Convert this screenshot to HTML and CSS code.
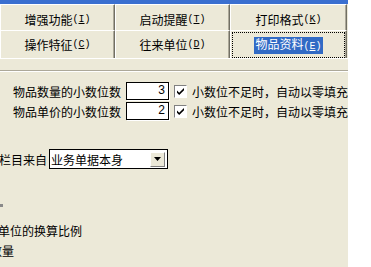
FILE: index.html
```html
<!DOCTYPE html>
<html lang="zh-CN">
<head>
    <meta charset="UTF-8">
    <title>选项</title>
    <link rel="stylesheet" href="styles.css">
</head>
<body>
    <div class="dialog">
        <div class="tabs">
            <div class="tab-row back">
                <div class="tab">增强功能<span class="key">(<u>I</u>)</span></div>
                <div class="tab">启动提醒<span class="key">(<u>T</u>)</span></div>
                <div class="tab wide">打印格式<span class="key">(<u>K</u>)</span></div>
            </div>
            <div class="tab-row front">
                <div class="tab">操作特征<span class="key">(<u>C</u>)</span></div>
                <div class="tab">往来单位<span class="key">(<u>D</u>)</span></div>
                <div class="tab wide active">
                    <div class="focus"><span class="sel">物品资料<span class="key">(<u>E</u>)</span></span></div>
                </div>
            </div>
        </div>

        <div class="page">
            <div class="rule"></div>

            <div class="field">
                <span class="label">物品数量的小数位数</span>
                <span class="spin">3</span>
                <span class="check">
                    <svg viewBox="0 0 13 13" width="13" height="13">
                        <path d="M3 5.5 L5.2 7.8 L10 3 L10 5.2 L5.2 10 L3 7.7 Z" fill="#000"/>
                    </svg>
                </span>
                <span class="check-text">小数位不足时，自动以零填充</span>
            </div>
            <div class="field">
                <span class="label">物品单价的小数位数</span>
                <span class="spin">2</span>
                <span class="check">
                    <svg viewBox="0 0 13 13" width="13" height="13">
                        <path d="M3 5.5 L5.2 7.8 L10 3 L10 5.2 L5.2 10 L3 7.7 Z" fill="#000"/>
                    </svg>
                </span>
                <span class="check-text">小数位不足时，自动以零填充</span>
            </div>

            <div class="source">
                <span class="source-label">栏目来自</span>
                <div class="combo">
                    <span class="combo-text">业务单据本身</span>
                    <span class="combo-btn">
                        <svg viewBox="0 0 7 4" width="7" height="4"><path d="M0 0 H7 L3.5 4 Z" fill="#000"/></svg>
                    </span>
                </div>
            </div>

            <div class="dot"></div>
            <div class="line ratio">单位的换算比例</div>
            <div class="line qty">辅助数量</div>
        </div>
    </div>
</body>
</html>
```

FILE: styles.css
```css
body {
    margin: 0;
    background: #fff;
    font-family: "Noto Sans CJK SC", sans-serif;
    font-size: 12px;
    color: #000;
    overflow: hidden;
}

.dialog {
    width: 348px;
    height: 267px;
    box-sizing: border-box;
    background: #ece9d8;
    border-top: 4px solid #3a6fd0;
    overflow: hidden;
}

/* tab strip */
.tab-row {
    display: flex;
    width: 347px;
}

.tab-row.back .tab {
    height: 26px;
    padding-top: 5px;
}

.tab-row.front .tab {
    height: 28px;
}

.tab {
    box-sizing: border-box;
    width: 115px;
    display: flex;
    align-items: center;
    justify-content: center;
    border-top: 1px solid #fff;
    border-left: 1px solid #fff;
    border-right: 1px solid #716f64;
    box-shadow: inset -1px 0 #aca899;
    line-height: 14px;
}

.tab.wide {
    width: 117px;
}

.key {
    font-family: "Liberation Mono", monospace;
    font-size: 10px;
}

.tab.active {
    padding: 1px 1px 0 1px;
}

.focus {
    flex: 1;
    align-self: stretch;
    display: flex;
    align-items: center;
    justify-content: center;
    border: 1px dotted #000;
}

.sel {
    background: #316ac5;
    color: #fff;
    padding: 0 1px;
}

/* page */
.page {
    border-top: 1px solid #fff;
}

.rule {
    margin-top: 11px;
    border-top: 1px solid #aca899;
    border-bottom: 1px solid #fff;
}

.field {
    display: flex;
    align-items: center;
    height: 18px;
    margin-left: 13px;
    margin-top: 2px;
}

.rule + .field {
    margin-top: 10px;
}

.label {
    width: 113px;
}

.spin {
    box-sizing: border-box;
    width: 43px;
    height: 18px;
    background: #fff;
    border: 1px solid #000;
    box-shadow: 1px 1px 0 #fff;
    font-family: "Liberation Sans", sans-serif;
    font-size: 12px;
    text-align: right;
    padding-right: 3px;
    line-height: 14px;
}

.check {
    box-sizing: border-box;
    width: 13px;
    height: 13px;
    margin-left: 5px;
    background: #fff;
    border: 1px solid;
    border-color: #808080 #fff #fff #808080;
    display: flex;
}

.check svg {
    margin: -1px;
}

.check-text {
    margin-left: 5px;
    white-space: nowrap;
}

.source {
    display: flex;
    align-items: center;
    margin-top: 29px;
    margin-left: -1px;
}

.source-label {
    width: 50px;
}

.combo {
    box-sizing: border-box;
    width: 119px;
    height: 20px;
    background: #fff;
    border: 1px solid #000;
    display: flex;
    align-items: center;
    justify-content: space-between;
    padding: 0 2px 0 1px;
}

.combo-btn {
    box-sizing: border-box;
    width: 15px;
    height: 15px;
    background: #ece9d8;
    border: 1px solid;
    border-color: #fff #808080 #808080 #fff;
    display: flex;
    align-items: center;
    justify-content: center;
}

.dot {
    width: 3px;
    height: 3px;
    margin-top: 35px;
    background: #8a8a8a;
}

.line {
    height: 20px;
    line-height: 20px;
    white-space: nowrap;
}

.ratio {
    margin-top: 14px;
    margin-left: -2px;
}

.qty {
    margin-left: -34px;
}
```
